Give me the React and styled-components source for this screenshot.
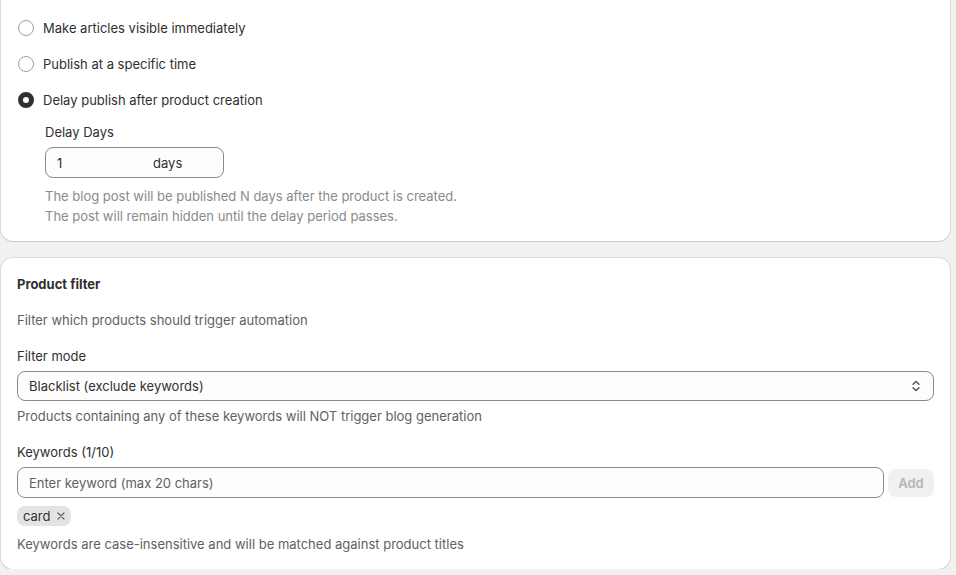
import React, { useState } from "react";
import styled, { createGlobalStyle } from "styled-components";

const GlobalStyle = createGlobalStyle`
  html, body {
    margin: 0;
    padding: 0;
    background: #f1f1f1;
    font-family: Inter, "Noto Sans", sans-serif;
    font-size: 13px;
    line-height: 20px;
    color: #303030;
    overflow: hidden;
  }
  * { box-sizing: border-box; }
`;

const Page = styled.div`
  display: flex;
  flex-direction: column;
  gap: 17px;
  padding: 0 6px 0 1px;
`;

const Card = styled.section`
  background: #fff;
  border-radius: 12px;
  padding: 16px 16px 15px;
  margin-top: ${(p) => (p.$cut ? "-30px" : "0")};
  padding-top: ${(p) => (p.$cut ? "48px" : "16px")};
  box-shadow: 0 1px 0 0 rgba(26, 26, 26, 0.08), 0 0 0 1px rgba(0, 0, 0, 0.09);
`;

const Stack = styled.div`
  display: flex;
  flex-direction: column;
  gap: ${(p) => p.$gap || 16}px;
`;

const RadioRow = styled.label`
  display: flex;
  align-items: center;
  gap: 9px;
  height: 20px;
  cursor: pointer;
`;

const RadioDot = styled.span`
  width: 16px;
  height: 16px;
  margin-left: 1px;
  border-radius: 50%;
  background: #fff;
  border: ${(p) => (p.$checked ? "5px solid #303030" : "1px solid #9e9e9e")};
  flex-shrink: 0;
`;

const Nested = styled.div`
  padding-left: 28px;
  margin-top: -4px;
`;

const Label = styled.div`
  color: #303030;
  margin-bottom: 5px;
`;

const Heading = styled.h2`
  margin: 0;
  font-size: 13px;
  font-weight: 650;
  line-height: 20px;
  color: #303030;
`;

const Muted = styled.p`
  margin: 0;
  color: ${(p) => (p.$light ? "#8a8a8a" : "#616161")};
`;

const Field = styled.div`
  display: flex;
  align-items: center;
  height: ${(p) => p.$height || 30}px;
  width: ${(p) => p.$width || "100%"};
  flex: ${(p) => (p.$width ? "none" : "1")};
  border: 1px solid #8a8a8a;
  border-radius: 8px;
  background: #fdfdfd;
  padding: 0 12px 0 11px;
`;

const TextInput = styled.input`
  border: none;
  outline: none;
  background: transparent;
  font: inherit;
  color: #303030;
  padding: 0;
  width: ${(p) => p.$width || "100%"};
  &::placeholder {
    color: #616161;
  }
`;

const Suffix = styled.span`
  color: #303030;
`;

const HelpGroup = styled.div`
  margin-top: 8px;
`;

const SelectBox = styled(Field)`
  justify-content: space-between;
  padding-right: 12px;
`;

const InputRow = styled.div`
  display: flex;
  align-items: center;
  gap: 4px;
`;

const AddButton = styled.button`
  height: 28px;
  width: 46px;
  border: none;
  border-radius: 8px;
  background: #f0f0f0;
  color: #b5b5b5;
  font: inherit;
  font-weight: 600;
`;

const Tags = styled.div`
  display: flex;
  gap: 6px;
  margin-top: 8px;
`;

const Tag = styled.span`
  display: inline-flex;
  align-items: center;
  gap: 6px;
  height: 20px;
  padding: 0 6px;
  background: #e3e3e3;
  border-radius: 8px;
  color: #303030;
`;

const FieldHelp = styled(Muted)`
  margin-top: 5px;
`;

const FooterHelp = styled(Muted)`
  margin-top: 8px;
`;

const ChevronIcon = () => (
  <svg width="10" height="12" viewBox="0 0 10 12" fill="none">
    <path d="M2 4.2 5 1.5l3 2.7" stroke="#4a4a4a" strokeWidth="1.3" strokeLinecap="round" strokeLinejoin="round" />
    <path d="M2 7.8 5 10.5l3-2.7" stroke="#4a4a4a" strokeWidth="1.3" strokeLinecap="round" strokeLinejoin="round" />
  </svg>
);

const CloseIcon = () => (
  <svg width="8" height="8" viewBox="0 0 8 8">
    <path d="M1 1l6 6M7 1 1 7" stroke="#616161" strokeWidth="1.2" strokeLinecap="round" />
  </svg>
);

const options = [
  "Make articles visible immediately",
  "Publish at a specific time",
  "Delay publish after product creation",
];

export default function App() {
  const [selected, setSelected] = useState(2);

  return (
    <Page>
      <GlobalStyle />
      <Card $cut>
        <Stack>
          {options.map((opt, i) => (
            <RadioRow key={opt} onClick={() => setSelected(i)}>
              <RadioDot $checked={selected === i} />
              {opt}
            </RadioRow>
          ))}
          <Nested>
            <Label>Delay Days</Label>
            <Field $width="179px" $height={31}>
              <TextInput defaultValue="1" $width="96px" />
              <Suffix>days</Suffix>
            </Field>
            <HelpGroup>
              <Muted $light>The blog post will be published N days after the product is created.</Muted>
              <Muted $light>The post will remain hidden until the delay period passes.</Muted>
            </HelpGroup>
          </Nested>
        </Stack>
      </Card>

      <Card>
        <Stack>
          <Heading>Product filter</Heading>
          <Muted>Filter which products should trigger automation</Muted>
          <div>
            <Label>Filter mode</Label>
            <SelectBox>
              <span>Blacklist (exclude keywords)</span>
              <ChevronIcon />
            </SelectBox>
            <FieldHelp>Products containing any of these keywords will NOT trigger blog generation</FieldHelp>
          </div>
          <div>
            <Label>Keywords (1/10)</Label>
            <InputRow>
              <Field $height={31}>
                <TextInput placeholder="Enter keyword (max 20 chars)" />
              </Field>
              <AddButton disabled>Add</AddButton>
            </InputRow>
            <Tags>
              <Tag>
                card
                <CloseIcon />
              </Tag>
            </Tags>
            <FooterHelp>Keywords are case-insensitive and will be matched against product titles</FooterHelp>
          </div>
        </Stack>
      </Card>
    </Page>
  );
}
